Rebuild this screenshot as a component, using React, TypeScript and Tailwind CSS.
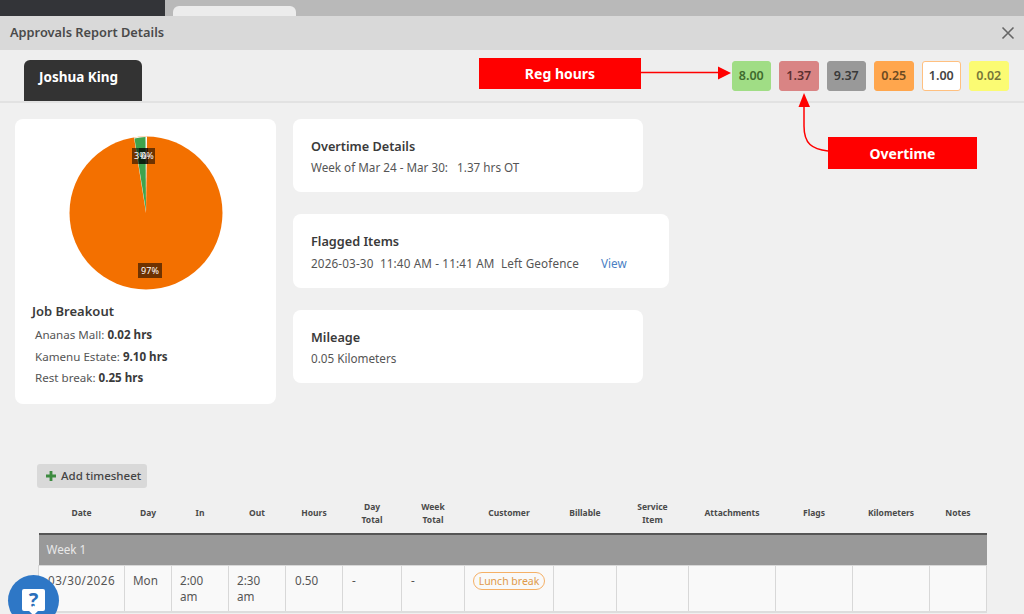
const body = { fontFamily: '"Noto Sans", "Open Sans", sans-serif' };

const badges = [
  { value: "8.00", className: "bg-[#a0dd85] text-[#3f6b2e] border-[#a0dd85]" },
  { value: "1.37", className: "bg-[#d98484] text-[#5c3030] border-[#d98484]" },
  { value: "9.37", className: "bg-[#999999] text-[#3a3a3a] border-[#999999]" },
  { value: "0.25", className: "bg-[#ffa64d] text-[#6b4a22] border-[#ffa64d]" },
  { value: "1.00", className: "bg-white text-[#444444] border-[#ffc080]" },
  { value: "0.02", className: "bg-[#fbfb73] text-[#77773a] border-[#fbfb73]" },
];

const columns = [
  { label: ["Date"], width: "w-[86px]" },
  { label: ["Day"], width: "w-[47px]" },
  { label: ["In"], width: "w-[57px]" },
  { label: ["Out"], width: "w-[57px]" },
  { label: ["Hours"], width: "w-[57px]" },
  { label: ["Day", "Total"], width: "w-[59px]" },
  { label: ["Week", "Total"], width: "w-[63px]" },
  { label: ["Customer"], width: "w-[89px]" },
  { label: ["Billable"], width: "w-[63px]" },
  { label: ["Service", "Item"], width: "w-[72px]" },
  { label: ["Attachments"], width: "w-[87px]" },
  { label: ["Flags"], width: "w-[77px]" },
  { label: ["Kilometers"], width: "w-[77px]" },
  { label: ["Notes"], width: "w-[57px]" },
];

const Card = ({ title, className, children }: { title: string; className: string; children: React.ReactNode }) => (
  <div className={`${className} rounded-lg bg-white pt-[17px] pl-[18px]`}>
    <h3 className="text-[12.7px] leading-5 font-semibold text-[#3a3a3a]">{title}</h3>
    <div className="mt-px text-[11.7px] leading-5 whitespace-pre text-[#555555]">{children}</div>
  </div>
);

const Pie = () => (
  <svg viewBox="0 0 156 156" className="mx-auto block h-[156px] w-[156px]">
    <circle cx="78" cy="78" r="76.5" fill="#f37000" />
    <path d="M78 78 L66 2.5 A76.5 76.5 0 0 1 79 1.5 Z" fill="#ffffff" />
    <path d="M78 76 L66.5 3.5 A76 76 0 0 1 77.5 2 Z" fill="#3fa34d" />
    <rect x="64" y="13" width="16" height="16" fill="#000000" fillOpacity="0.55" />
    <rect x="71" y="13" width="16" height="16" fill="#000000" fillOpacity="0.55" />
    <text x="66" y="24" fontSize="9" fill="#ffffff">3%</text>
    <text x="73" y="24" fontSize="9" fill="#ffffff">0%</text>
    <rect x="70" y="128" width="24" height="15" fill="#000000" fillOpacity="0.55" />
    <text x="82" y="139" fontSize="9" fill="#ffffff" textAnchor="middle">97%</text>
  </svg>
);

const Row = ({ name, value }: { name: string; value: string }) => (
  <p className="text-[11.6px] leading-[21.5px] text-[#555555]">
    {name}: <b className="font-bold text-[#3a3a3a]">{value}</b>
  </p>
);

const App = () => {
  return (
    <div style={body} className="relative h-[614px] w-[1024px] overflow-hidden bg-[#f0f0f0]">
      {/* strip of the page behind the modal */}
      <div className="flex h-[16px] bg-[#b9b9b9]">
        <div className="w-[165px] bg-[#333438]" />
        <div className="mt-[6px] ml-[8px] w-[123px] rounded-t-md bg-[#ececec]" />
      </div>

      {/* modal header */}
      <div className="flex h-[34px] items-center justify-between bg-[#d9d9d9] pr-[9px] pl-[10px]">
        <h2 className="text-[12.8px] font-semibold text-[#4a4a4a]">Approvals Report Details</h2>
        <svg viewBox="0 0 14 14" className="h-[14px] w-[14px]" fill="none" stroke="#666666" strokeWidth="1.6">
          <path d="M1.5 1.5 L12.5 12.5 M12.5 1.5 L1.5 12.5" />
        </svg>
      </div>

      {/* employee tab and totals */}
      <div className="flex h-[53px] items-end justify-between border-b-2 border-[#e2e2e2] bg-[#eeeeee] pr-[15.5px] pl-[24px]">
        <div className="h-[41px] w-[118px] rounded-t-md bg-[#333333] pt-[7px] pl-[15px] text-[13.5px] font-bold text-white">
          Joshua King
        </div>
        <div className="mb-[10px] flex gap-2">
          {badges.map((b) => (
            <span
              key={b.value}
              className={`flex h-[30px] w-[39.5px] items-center justify-center rounded-[3px] border text-[12.5px] font-semibold ${b.className}`}
            >
              {b.value}
            </span>
          ))}
        </div>
      </div>

      {/* summary cards */}
      <div className="mt-[16px] ml-[15px] flex gap-[17px]">
        <div className="h-[285px] w-[261px] rounded-lg bg-white pt-[16px] pl-[17px]">
          <div className="w-[228px]">
            <Pie />
          </div>
          <h3 className="mt-[10px] text-[13px] leading-5 font-semibold text-[#3a3a3a]">Job Breakout</h3>
          <div className="mt-[3px] ml-[3px]">
            <Row name="Ananas Mall" value="0.02 hrs" />
            <Row name="Kamenu Estate" value="9.10 hrs" />
            <Row name="Rest break" value="0.25 hrs" />
          </div>
        </div>

        <div className="flex flex-col gap-[22px]">
          <Card title="Overtime Details" className="h-[73px] w-[350px]">
            {"Week of Mar 24 - Mar 30:   1.37 hrs OT"}
          </Card>
          <Card title="Flagged Items" className="h-[74px] w-[376px]">
            <div className="mt-[2px] tracking-[0.15px]">
              {"2026-03-30  11:40 AM - 11:41 AM  Left Geofence"}
              <span className="ml-[22px] tracking-normal text-[#4a7fc4]">View</span>
            </div>
          </Card>
          <Card title="Mileage" className="h-[73px] w-[350px]">
            0.05 Kilometers
          </Card>
        </div>
      </div>

      {/* timesheet */}
      <div className="mt-[60px] ml-[37px]">
        <button className="flex h-[24px] w-[110px] items-center gap-[5px] rounded-[3px] bg-[#d9d9d9] pl-[9px] text-[11.5px] font-medium text-[#444444]">
          <svg viewBox="0 0 10 10" className="h-[10px] w-[10px]" fill="#3d8b40">
            <path d="M3.6 0 H6.4 V3.6 H10 V6.4 H6.4 V10 H3.6 V6.4 H0 V3.6 H3.6 Z" />
          </svg>
          Add timesheet
        </button>
        <table className="mt-[5px] ml-px w-[948px] table-fixed border-collapse text-[11.7px] text-[#555555]">
          <colgroup>
            {columns.map((c) => (
              <col key={c.label.join(" ")} className={c.width} />
            ))}
          </colgroup>
          <thead>
            <tr className="h-[41px] border-b-2 border-[#555555]">
              {columns.map((c) => (
                <th key={c.label.join(" ")} className="pb-px text-[8.5px] leading-[13px] font-bold text-[#4a4a4a]">
                  {c.label.map((line) => (
                    <div key={line}>{line}</div>
                  ))}
                </th>
              ))}
            </tr>
          </thead>
          <tbody>
            <tr className="h-[31px] bg-[#999999]">
              <td colSpan={14} className="pl-[8px] text-[11.7px] text-[#e8e8e8]">
                Week 1
              </td>
            </tr>
            <tr className="h-[47px] border-b-2 border-[#dddddd] bg-[#f9f9f9] align-top leading-[16.5px]">
              <td className="border border-[#d8d8d8] pt-[6px] pl-[9px] tracking-[0.5px]">03/30/2026</td>
              <td className="border border-[#d8d8d8] pt-[6px] pl-[8px]">Mon</td>
              <td className="border border-[#d8d8d8] pt-[6px] pr-[20px] pl-[8px]">2:00 am</td>
              <td className="border border-[#d8d8d8] pt-[6px] pr-[20px] pl-[8px]">2:30 am</td>
              <td className="border border-[#d8d8d8] pt-[6px] pl-[9px]">0.50</td>
              <td className="border border-[#d8d8d8] pt-[6px] pl-[9px]">-</td>
              <td className="border border-[#d8d8d8] pt-[6px] pl-[9px]">-</td>
              <td className="border border-[#d8d8d8] pt-[6px] pl-[8px]">
                <span className="block h-[18px] w-[72px] rounded-full border border-[#f5b066] text-center text-[10.5px] leading-[16px] whitespace-nowrap text-[#e09a4a]">
                  Lunch break
                </span>
              </td>
              <td className="border border-[#d8d8d8]" />
              <td className="border border-[#d8d8d8]" />
              <td className="border border-[#d8d8d8]" />
              <td className="border border-[#d8d8d8]" />
              <td className="border border-[#d8d8d8]" />
              <td className="border border-[#d8d8d8]" />
            </tr>
          </tbody>
        </table>
      </div>

      {/* red annotations over the screenshot */}
      <div className="absolute top-[58px] left-[479px] flex h-[31px] w-[162px] items-center justify-center bg-[#ff0000] text-[14px] font-bold text-white">
        Reg hours
      </div>
      <div className="absolute top-[137px] left-[828px] flex h-[32px] w-[149px] items-center justify-center bg-[#ff0000] text-[14px] font-bold text-white">
        Overtime
      </div>
      <svg className="absolute top-0 left-0 h-[614px] w-[1024px]" viewBox="0 0 1024 614" fill="none">
        <path d="M640 72.5 H720" stroke="#ff0000" strokeWidth="1.5" />
        <path d="M731 73 L718 66.5 V79.5 Z" fill="#ff0000" />
        <path d="M828 151 C812 149 804 144 804 126 V105" stroke="#ff0000" strokeWidth="1.5" />
        <path d="M804 93 L798.5 107 H810 Z" fill="#ff0000" />
      </svg>

      {/* help button */}
      <div className="absolute top-[575px] left-[8px] flex h-[51px] w-[51px] justify-center rounded-full bg-[#2e77c6] pt-[14px]">
        <div className="relative flex h-[22px] w-[23px] items-center justify-center rounded-[2px] bg-white text-[20px] font-bold text-[#2a6fbb]">
          ?
          <span className="absolute -bottom-[3px] left-[8px] h-[7px] w-[7px] rotate-45 bg-white" />
        </div>
      </div>
    </div>
  );
};

export default App;
